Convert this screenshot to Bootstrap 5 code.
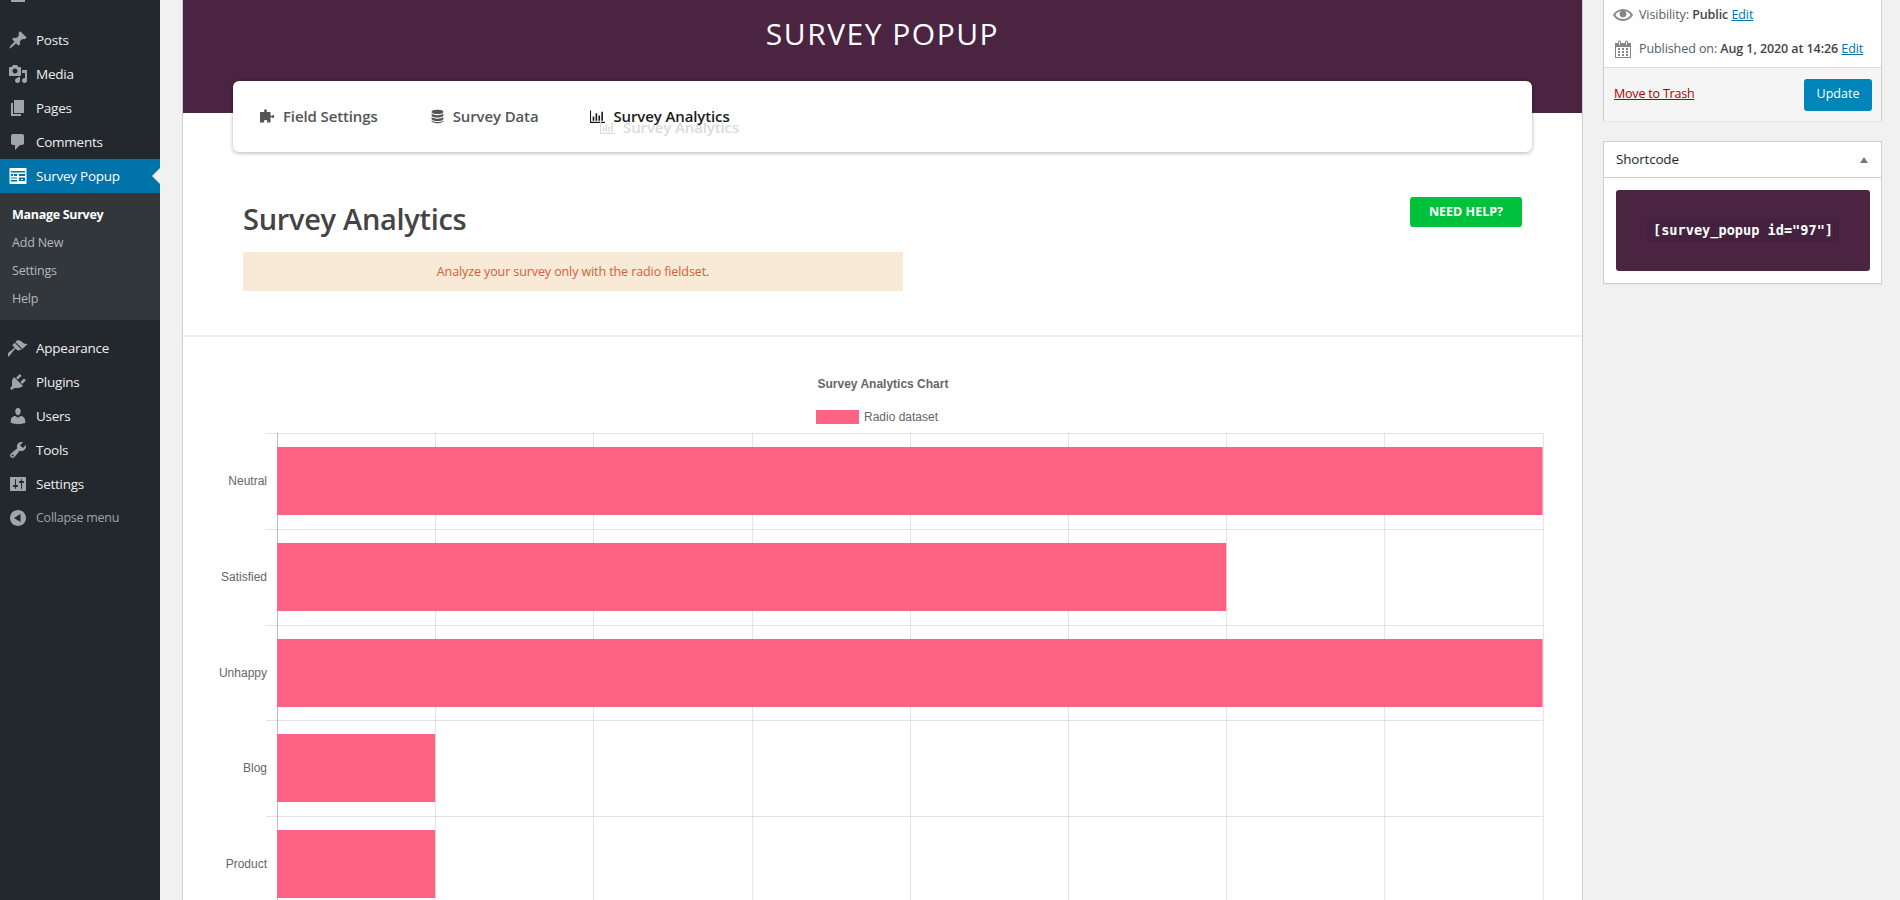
<!DOCTYPE html>
<html>
  <head>
    <title>Survey Analytics</title>
    <link href="https://cdn.jsdelivr.net/npm/bootstrap@5.3.3/dist/css/bootstrap.min.css" rel="stylesheet" />
    <style>
      body { background: #f1f1f1; font-family: "Open Sans", "Noto Sans", sans-serif; font-size: 13px; color: #444; height: 900px; overflow: hidden; }
      .wp-shell { height: 900px; overflow: hidden; }
      .wp-side { width: 160px; flex: none; background: #23282d; padding-top: 23px; position: relative; }
      .wp-sliver { position: absolute; left: 11px; top: 0; width: 14px; height: 2px; background: #a0a5aa; }
      .wp-item { height: 34px; color: #eee; font-size: 13.5px; letter-spacing: -0.25px; padding-left: 8px; gap: 8px; text-decoration: none; position: relative; }
      .wp-item svg { width: 20px; height: 20px; fill: #a0a5aa; flex: none; }
      .wp-item.is-current { background: #0073aa; color: #fff; }
      .wp-item.is-current::after { content: ""; position: absolute; right: 0; top: 9px; border: 8px solid transparent; border-right-color: #f1f1f1; border-left-width: 0; }
      .wp-item.is-muted { color: #a0a5aa; font-size: 12.5px; }
      .wp-sub { background: #32373c; padding: 8px 0 7px; margin-bottom: 11px; }
      .wp-sub a { height: 28px; padding-left: 12px; color: #b4b9be; font-size: 12.5px; letter-spacing: -0.2px; text-decoration: none; }
      .wp-sub a.is-on { color: #fff; font-weight: 700; letter-spacing: -0.3px; }
      .sv-main { width: 1401px; flex: none; margin-left: 22px; background: #fff; border-left: 1px solid #ccd0d4; border-right: 1px solid #ccd0d4; }
      .sv-head { height: 113px; background: #4a2441; color: #fff; font-size: 30px; font-weight: 400; letter-spacing: 1.5px; padding-top: 11px; text-align: center; }
      .sv-tabs { height: 71px; margin: -32px 50px 0 50px; background: #fff; border-radius: 6px; box-shadow: 0 1px 4px rgba(0, 0, 0, .3); position: relative; padding-left: 27px; gap: 52px; font-size: 15px; font-weight: 600; color: #555; letter-spacing: -0.12px; }
      .sv-tab { gap: 8px; flex: none; }
      .sv-tab svg { width: 15px; height: 15px; fill: currentColor; flex: none; }
      .sv-tab.is-on { color: #1a1a1a; }
      .sv-ghost { position: absolute; left: 367px; top: 35px; color: #dcdcdc; gap: 8px; }
      .sv-ghost svg { width: 15px; height: 15px; fill: currentColor; }
      .sv-intro { height: 185px; border-bottom: 2px solid #eee; padding: 45px 60px 0 60px; }
      .sv-title { font-size: 29px; font-weight: 600; line-height: 36px; color: #444; letter-spacing: -0.3px; margin: 4px 0 15px; }
      .sv-note { width: 660px; height: 39px; padding-top: 2px; background: #f9e9d7; color: #d2603a; font-size: 12.5px; letter-spacing: -0.1px; }
      .sv-help { width: 112px; height: 30px; background: #00c13c; color: #fff; border: 0; border-radius: 3px; font-size: 12.5px; font-weight: 700; padding: 0; }
      .sv-help:hover { background: #00c13c; color: #fff; }
      .sv-chart { display: block; }
      .sv-chart text { font-family: "Liberation Sans", Arial, sans-serif; font-size: 12px; fill: #666; }
      .sv-chart .chart-title { font-weight: 700; }
      .wp-rail { width: 279px; flex: none; margin: -2px 0 0 20px; }
      .wp-box { background: #fff; border: 1px solid #ccd0d4; box-shadow: 0 1px 1px rgba(0, 0, 0, .04); }
      .wp-box a { color: #0073aa; }
      .wp-pub { height: 123px; border-top: 0; margin-bottom: 20px; }
      .wp-meta { height: 34px; padding-left: 9px; gap: 6px; letter-spacing: -0.08px; font-size: 12.5px; color: #555d66; }
      .wp-meta svg { width: 20px; height: 20px; fill: #82878c; flex: none; }
      .wp-meta b { font-weight: 600; color: #444; }
      .wp-foot { height: 54px; margin-top: 1px; background: #f5f5f5; border-top: 1px solid #ddd; padding: 0 9px 0 10px; }
      .wp-foot a.wp-trash { color: #a00; font-size: 12.5px; letter-spacing: -0.2px; }
      .wp-update { width: 68px; height: 32px; background: #0085ba; color: #fff; border: 0; border-radius: 3px; font-size: 12.5px; padding: 0; }
      .wp-update:hover { background: #0085ba; color: #fff; }
      .wp-sc { height: 143px; }
      .wp-sc-head { height: 36px; border-bottom: 1px solid #ccd0d4; padding: 0 13px 0 12px; font-size: 13.5px; color: #23282d; letter-spacing: -0.2px; }
      .wp-caret { width: 0; height: 0; border-left: 4px solid transparent; border-right: 4px solid transparent; border-bottom: 6px solid #72777c; }
      .wp-sc-body { height: 81px; margin: 12px 11px 0 12px; background: #4a2441; border-radius: 3px; }
      .wp-sc-code { font-family: "DejaVu Sans Mono", "Liberation Mono", monospace; font-size: 13.6px; font-weight: 700; color: #fff; background: rgba(0, 0, 0, .07); padding: 2px 6px; line-height: 19px; }
    </style>
  </head>
  <body>
    <div class="wp-shell d-flex">
      <nav class="wp-side d-flex flex-column">
        <div class="wp-sliver"></div>
        <a class="wp-item d-flex align-items-center" href="#"><svg viewBox="0 0 20 20"><path d="M10.44 3.02l1.82-1.82 6.36 6.35-1.83 1.82c-1.05-.68-2.48-.57-3.41.36l-.75.75c-.92.93-1.04 2.35-.35 3.41l-1.83 1.82-2.41-2.41-2.8 2.79c-.42.42-3.38 2.71-3.8 2.29s1.86-3.39 2.28-3.81l2.79-2.79L4.1 9.36l1.83-1.82c1.05.69 2.48.57 3.4-.36l.75-.75c.93-.92 1.05-2.35.36-3.41z"/></svg>Posts</a>
        <a class="wp-item d-flex align-items-center" href="#"><svg viewBox="0 0 20 20"><path d="M13 11V4c0-.55-.45-1-1-1h-1.67L9 1H5L3.67 3H2c-.55 0-1 .45-1 1v7c0 .55.45 1 1 1h10c.55 0 1-.45 1-1zM7 4.5c1.38 0 2.5 1.12 2.5 2.5S8.38 9.5 7 9.5 4.5 8.38 4.5 7 5.62 4.5 7 4.5zM14 6h5v10.5c0 1.38-1.12 2.5-2.5 2.5S14 17.88 14 16.5s1.12-2.5 2.5-2.5c.17 0 .34.02.5.05V9h-3V6zm-4 8.05V13h2v3.5c0 1.38-1.12 2.5-2.5 2.5S7 17.88 7 16.5 8.12 14 9.5 14c.17 0 .34.02.5.05z"/></svg>Media</a>
        <a class="wp-item d-flex align-items-center" href="#"><svg viewBox="0 0 20 20"><path d="M6 15V2h10v13H6zm-1 1h8v2H3V5h2v11z"/></svg>Pages</a>
        <a class="wp-item d-flex align-items-center" href="#"><svg viewBox="0 0 20 20"><path d="M5 2h9c1.1 0 2 .9 2 2v7c0 1.1-.9 2-2 2h-2l-5 5v-5H5c-1.1 0-2-.9-2-2V4c0-1.1.9-2 2-2z"/></svg>Comments</a>
        <a class="wp-item is-current d-flex align-items-center" href="#"><svg viewBox="0 0 20 20"><path fill="#fff" fill-rule="evenodd" d="M1.500 2h17v16h-17zM3 5v1.500h14V5zM3 8v2h2v-2zM6 8v2h3v-2zM11 8v2h6v-2zM3 11.500v1h6v-1zM11 11.500v3.500h6v-3.500zM3 14v1.500h6V14zM13 13h2v1h-2z"/></svg>Survey Popup</a>
        <div class="wp-sub d-flex flex-column">
          <a class="is-on d-flex align-items-center" href="#">Manage Survey</a>
          <a class="d-flex align-items-center" href="#">Add New</a>
          <a class="d-flex align-items-center" href="#">Settings</a>
          <a class="d-flex align-items-center" href="#">Help</a>
        </div>
        <a class="wp-item d-flex align-items-center" href="#"><svg viewBox="0 0 20 20"><path d="M14.48 11.06L7.41 3.99l1.5-1.5c.5-.56 2.3-.47 3.51.32 1.21.8 1.43 1.28 2.91 2.1 1.18.64 2.45 1.26 4.45.85zm-.71.71L6.7 4.7 4.93 6.47c-.39.39-.39 1.02 0 1.41l1.06 1.06c.39.39.39 1.03 0 1.42-.6.6-6.4 5.06-6.99 5.65-.59.58-.59 1.53 0 2.12.58.59 1.53.59 2.12 0 .59-.59 5.05-6.39 5.65-6.99.39-.39 1.03-.39 1.42 0l1.06 1.06c.39.39 1.02.39 1.41 0z"/></svg>Appearance</a>
        <a class="wp-item d-flex align-items-center" href="#"><svg viewBox="0 0 20 20"><path d="M13.11 4.36L9.87 7.6 8 5.73l3.24-3.24c.35-.34 1.05-.2 1.56.32.52.51.66 1.21.31 1.55zm-8 1.77l.91-1.12 9.01 9.01-1.19.84c-.71.71-2.63 1.16-3.82 1.16H6.14L4.9 17.26c-.59.59-1.54.59-2.12 0-.59-.58-.59-1.53 0-2.12l1.24-1.24v-3.88c0-1.13.4-3.19 1.09-3.89zm7.26 3.97l3.24-3.24c.34-.35 1.04-.21 1.55.31.52.51.66 1.21.31 1.55l-3.24 3.25z"/></svg>Plugins</a>
        <a class="wp-item d-flex align-items-center" href="#"><svg viewBox="0 0 20 20"><path d="M10 9.25c-2.27 0-2.73-3.44-2.73-3.44C7 4.02 7.82 2 9.97 2c2.16 0 2.98 2.02 2.71 3.81 0 0-.41 3.44-2.68 3.44zm0 2.57L12.72 10c2.39 0 4.52 2.33 4.52 4.53v2.49s-3.65 1.13-7.24 1.13c-3.65 0-7.24-1.13-7.24-1.13v-2.49c0-2.25 1.94-4.48 4.47-4.48z"/></svg>Users</a>
        <a class="wp-item d-flex align-items-center" href="#"><svg viewBox="0 0 20 20"><path d="M16.68 9.77c-1.34 1.34-3.3 1.67-4.95.99l-5.41 6.52c-.99.99-2.59.99-3.58 0s-.99-2.59 0-3.57l6.52-5.42c-.68-1.65-.35-3.61.99-4.95 1.28-1.28 3.12-1.62 4.72-1.06l-2.89 2.89 2.82 2.82 2.86-2.87c.53 1.58.18 3.39-1.08 4.65zM3.81 16.21c.4.39 1.04.39 1.43 0 .4-.4.4-1.04 0-1.43-.39-.4-1.03-.4-1.43 0-.39.39-.39 1.03 0 1.43z"/></svg>Tools</a>
        <a class="wp-item d-flex align-items-center" href="#"><svg viewBox="0 0 20 20"><path d="M18 16V4c0-.55-.45-1-1-1H3c-.55 0-1 .45-1 1v12c0 .55.45 1 1 1h14c.55 0 1-.45 1-1zM8 11h1c.55 0 1 .45 1 1s-.45 1-1 1H8v1.5c0 .28-.22.5-.5.5s-.5-.22-.5-.5V13H6c-.55 0-1-.45-1-1s.45-1 1-1h1V5.5c0-.28.22-.5.5-.5s.5.22.5.5V11zm5-2h-1c-.55 0-1-.45-1-1s.45-1 1-1h1V5.5c0-.28.22-.5.5-.5s.5.22.5.5V7h1c.55 0 1 .45 1 1s-.45 1-1 1h-1v5.5c0 .28-.22.5-.5.5s-.5-.22-.5-.5V9z"/></svg>Settings</a>
        <a class="wp-item is-muted d-flex align-items-center" href="#"><svg viewBox="0 0 20 20"><path d="M18 10c0-4.42-3.58-8-8-8s-8 3.58-8 8 3.58 8 8 8 8-3.58 8-8zm-5.5 4L6 10l6.5-4v8z"/></svg>Collapse menu</a>
      </nav>

      <main class="sv-main">
        <div class="sv-head">SURVEY POPUP</div>
        <div class="sv-tabs d-flex align-items-center">
          <div class="sv-tab d-flex align-items-center"><svg viewBox="0 0 15 14"><path d="M4 1c0-1.200 3-1.200 3 0 0 .6-.4 1-.4 1.600H10.500v3.600h1.300c.4-.5.8-.8 1.400-.8 1.400 0 1.400 3.200 0 3.200-.6 0-1-.3-1.400-.8h-1.300V13H7c.2-.5.3-.9.300-1.300 0-1.600-3.300-1.600-3.300 0 0 .4.100.8.300 1.300H0V2.600h4.400C4.400 2 4 1.600 4 1z"/></svg>Field Settings</div>
          <div class="sv-tab d-flex align-items-center"><svg viewBox="0 0 14 14"><path d="M7 .8c3 0 5.500.8 5.500 1.900S10 4.600 7 4.600 1.500 3.800 1.500 2.700 4 .8 7 .8zM1.500 4.300C2.500 5.300 4.700 5.800 7 5.800s4.500-.5 5.500-1.500v1.800C12.500 7.200 10 8 7 8S1.500 7.200 1.500 6.100zM1.500 7.500C2.500 8.500 4.700 9 7 9s4.500-.5 5.500-1.500v1.800c0 1.100-2.500 1.900-5.500 1.900s-5.500-.8-5.500-1.900zM1.500 10.700c1 1 3.200 1.500 5.500 1.500s4.500-.5 5.500-1.500v.8C12.500 12.500 10 13.300 7 13.300s-5.500-.8-5.500-1.800z"/></svg>Survey Data</div>
          <div class="sv-tab is-on d-flex align-items-center"><svg viewBox="0 0 14 14"><path d="M0 1.500h1V12h13v1H0zM2.500 7h1.500v4H2.500zM5.200 4h1.500v7H5.200zM7.900 6h1.500v5H7.900zM10.600 2.500h1.500V11h-1.500z"/></svg>Survey Analytics</div>
          <div class="sv-ghost d-flex align-items-center"><svg viewBox="0 0 14 14"><path d="M0 1.500h1V12h13v1H0zM2.500 7h1.500v4H2.500zM5.200 4h1.500v7H5.200zM7.900 6h1.500v5H7.900zM10.600 2.500h1.500V11h-1.500z"/></svg>Survey Analytics</div>
        </div>
        <div class="sv-intro d-flex justify-content-between align-items-start">
          <div>
            <h1 class="sv-title">Survey Analytics</h1>
            <div class="sv-note d-flex align-items-center justify-content-center">Analyze your survey only with the radio fieldset.</div>
          </div>
          <button class="btn sv-help">NEED HELP?</button>
        </div>
        <svg id="chart" class="sv-chart" width="1399" height="563" viewBox="183 337 1399 563"></svg>
      </main>

      <aside class="wp-rail">
        <div class="wp-box wp-pub">
          <div class="wp-meta d-flex align-items-center"><svg viewBox="0 0 20 20"><path d="M19.7 9.400C17.700 6 14 3.900 10 3.900S2.300 6 .3 9.400L0 10l.3.600c2 3.400 5.700 5.500 9.700 5.500s7.700-2.100 9.700-5.500l.3-.6-.3-.6zM10 14.100c-3.100 0-6-1.600-7.700-4.100C3.600 8 5.700 6.600 8 6.100c-.9.600-1.500 1.700-1.500 2.900 0 1.900 1.600 3.500 3.500 3.500s3.500-1.600 3.500-3.500c0-1.200-.6-2.300-1.500-2.900 2.300.5 4.400 1.900 5.700 3.900-1.700 2.500-4.600 4.100-7.700 4.100z"/></svg><span>Visibility: <b>Public</b> <a href="#">Edit</a></span></div>
          <div class="wp-meta d-flex align-items-center"><svg viewBox="0 0 20 20"><path d="M15 4h3v15H2V4h3V3c0-.41.15-.76.44-1.060.29-.29.65-.44 1.060-.44s.77.15 1.060.44c.29.300.44.650.44 1.060v1h4V3c0-.41.15-.76.44-1.060.29-.29.65-.44 1.060-.44s.77.15 1.060.44c.29.300.44.650.44 1.060v1zM6 3v2.500c0 .14.05.26.15.36.09.09.21.14.35.14s.26-.05.35-.14c.1-.1.15-.22.15-.36V3c0-.14-.05-.26-.15-.35-.09-.1-.21-.15-.35-.15s-.26.05-.35.15c-.1.09-.15.21-.15.35zm7 0v2.500c0 .14.05.26.14.36.1.09.22.14.36.14s.26-.05.36-.14c.09-.1.14-.22.14-.36V3c0-.14-.05-.26-.14-.35-.1-.1-.22-.15-.36-.15s-.26.05-.36.15c-.09.09-.14.21-.14.35zm4 15V8H3v10h14zM7 9v2H5V9h2zm2 0h2v2H9V9zm4 2V9h2v2h-2zm-6 1v2H5v-2h2zm2 0h2v2H9v-2zm4 2v-2h2v2h-2zm-6 1v2H5v-2h2zm4 2H9v-2h2v2zm4 0h-2v-2h2v2z"/></svg><span>Published on: <b>Aug 1, 2020 at 14:26</b> <a href="#">Edit</a></span></div>
          <div class="wp-foot d-flex align-items-center justify-content-between">
            <a class="wp-trash" href="#">Move to Trash</a>
            <button class="btn wp-update">Update</button>
          </div>
        </div>
        <div class="wp-box wp-sc">
          <div class="wp-sc-head d-flex align-items-center justify-content-between"><span>Shortcode</span><span class="wp-caret"></span></div>
          <div class="wp-sc-body d-flex align-items-center justify-content-center"><span class="wp-sc-code">[survey_popup id="97"]</span></div>
        </div>
      </aside>
    </div>

    <script src="https://cdn.jsdelivr.net/npm/bootstrap@5.3.3/dist/js/bootstrap.bundle.min.js"></script>
    <script>
      // horizontal bar chart, values on a 0-8 scale
      const rows = [
        { label: "Neutral", value: 8 },
        { label: "Satisfied", value: 6 },
        { label: "Unhappy", value: 8 },
        { label: "Blog", value: 1 },
        { label: "Product", value: 1 },
      ];
      const left = 277, step = 158.2, top0 = 433, rowH = 95.75;
      let out = "";
      out += `<text class="chart-title" x="883" y="388" text-anchor="middle">Survey Analytics Chart</text>`;
      out += `<rect x="816" y="410" width="43" height="14" fill="#ff6384"/>`;
      out += `<text x="864" y="421">Radio dataset</text>`;
      for (let i = 0; i <= 8; i++) {
        const x = Math.round(left + i * step) + 0.5;
        const c = i === 0 ? "rgba(0,0,0,.25)" : "rgba(0,0,0,.1)";
        out += `<line x1="${x}" x2="${x}" y1="433" y2="900" stroke="${c}"/>`;
      }
      for (let i = 0; i <= 5; i++) {
        const y = Math.round(top0 + i * rowH) + 0.5;
        out += `<line x1="266" x2="1543" y1="${y}" y2="${y}" stroke="rgba(0,0,0,.1)"/>`;
      }
      rows.forEach(function (row, i) {
        const y = Math.round(top0 + i * rowH + 14);
        out += `<rect x="277" y="${y}" width="${row.value * step}" height="68" fill="#ff6384"/>`;
        out += `<text x="267" y="${y + 38}" text-anchor="end">${row.label}</text>`;
      });
      document.getElementById("chart").innerHTML = out;
    </script>
  </body>
</html>
